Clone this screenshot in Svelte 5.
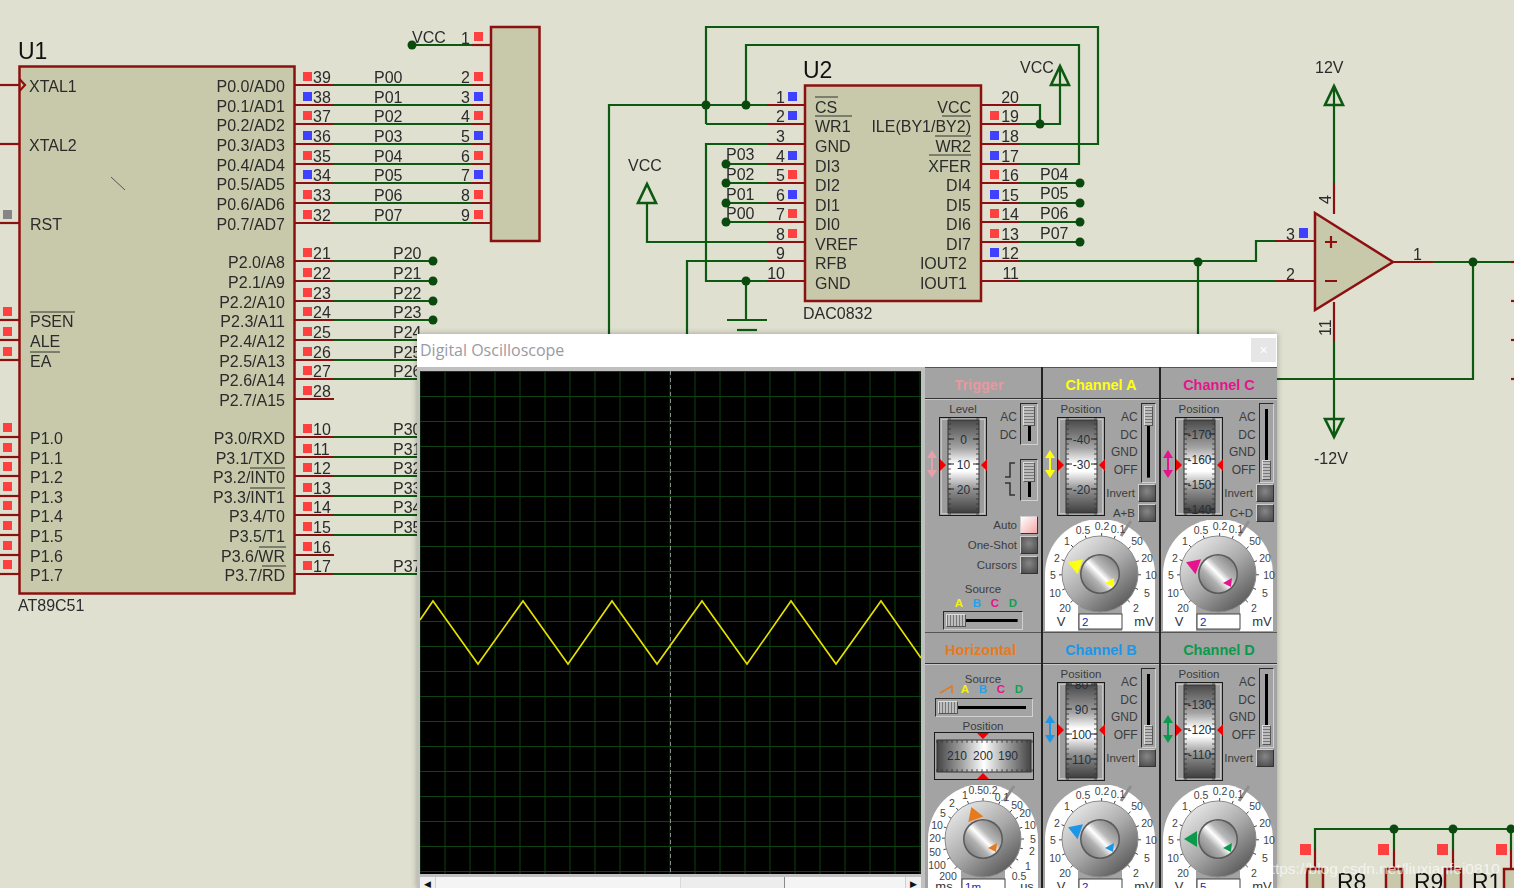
<script>
  const p0Y = [85, 105, 124, 144, 164, 183, 203, 223];
  const p0Labels = ['P0.0/AD0','P0.1/AD1','P0.2/AD2','P0.3/AD3','P0.4/AD4','P0.5/AD5','P0.6/AD6','P0.7/AD7'];
  const p0Blue = [false,true,false,true,false,true,false,false];
  const connBlue = [false,true,false,true,false,true,false,false];
  const p2Y = [261, 281, 301, 320, 340, 360, 379, 399];
  const p2Labels = ['P2.0/A8','P2.1/A9','P2.2/A10','P2.3/A11','P2.4/A12','P2.5/A13','P2.6/A14','P2.7/A15'];
  const p3Y = [437, 457, 476, 496, 515, 535, 555, 574];
  const p3Labels = ['P3.0/RXD','P3.1/TXD','P3.2/INT0','P3.3/INT1','P3.4/T0','P3.5/T1','P3.6/WR','P3.7/RD'];
  const p3Nets = ['P30','P31','P32','P33','P34','P35','','P37'];
  const p1Labels = ['P1.0','P1.1','P1.2','P1.3','P1.4','P1.5','P1.6','P1.7'];
  const leftPins = [[85,'XTAL1',false],[144,'XTAL2',false],[223,'RST','g'],[320,'PSEN','r'],[340,'ALE','r'],[360,'EA','r']];
  const u2Y = [105,124,144,164,183,203,222,242,261,281];
  const u2Left = ['CS','WR1','GND','DI3','DI2','DI1','DI0','VREF','RFB','GND'];
  const u2LeftSq = ['b','b','','b','r','b','r','r','',''];
  const u2Right = ['VCC','ILE(BY1/BY2)','WR2','XFER','DI4','DI5','DI6','DI7','IOUT2','IOUT1'];
  const u2RightSq = ['','r','b','b','r','b','r','r','b',''];
  const overlines = [[30,75,312],[30,60,352],[250,285,468],[250,285,488],[259,286,547],[262,286,566],[815,838,97],[815,852,116],[942,971,116],[935,971,136],[929,971,155]];
  const wires = [
    'M706 124V27H1098V144H1020','M746 105V45H1079V164H1020','M609 340V105H767','M706 124H767',
    'M767 144H706V281H767','M746 281V320','M727 320H767','M737 330H757',
    'M726 164H767','M726 183H767','M726 203H767','M726 222H767',
    'M647 203V242H767','M687 340V261H767',
    'M1020 105H1040V124','M1020 124H1060V66',
    'M1020 183H1080','M1020 203H1080','M1020 222H1080','M1020 242H1080',
    'M1020 261H1256V241H1275','M1020 281H1276','M1198 261V340',
    'M1334 86V183','M1334 342V437','M1433 262H1511','M1473 262V379H1270',
    'M412 45H472','M1315 849V829H1514','M1394 829V849','M1453 829V849','M1511 829V849'
  ];
  const pinsRed = [
    'M472 45H491','M1275 241H1315','M1276 281H1315','M1334 183V214','M1334 302V342','M1393 262H1433',
    'M1315 849V868','M1394 849V868','M1453 849V868','M1511 849V868',
    'M1511 262H1514','M1511 301H1514','M1511 340H1514','M1511 379H1514'
  ];
  const dots = [[412,45],[706,105],[746,105],[726,164],[726,183],[726,203],[726,222],[746,281],[1040,124],[1080,183],[1080,203],[1080,222],[1080,242],[1198,262],[1473,262],[1394,829],[1453,829],[1511,829]];

  const gridX = Array.from({length: 21}, (_, i) => 420 + i * 25);
  const gridY = Array.from({length: 21}, (_, i) => 371.5 + i * 25);
  const trace = '420,620 433,601 478,664 523,601 568,664 612,601 657,664 702,601 747,664 791,601 836,664 881,601 921,658';

  const vScale = [['0.1',18,-45],['0.2',2,-48],['0.5',-17,-44],['1',-33,-33],['2',-43,-16],['5',-47,1],['10',-45,19],['20',-35,34],['50',37,-33],['20',47,-16],['10',51,1],['5',47,19],['2',36,34]];
  const hScale = [['0.1',19,-42],['0.50.2',0,-49],['1',-18,-44],['2',-31,-36],['5',-40,-26],['10',-46,-14],['20',-48,-1],['50',-48,13],['100',-46,26],['200',-35,37],['50',34,-34],['20',42,-26],['10',47,-14],['5',50,0],['2',49,12],['1',45,27],['0.5',36,37]];

  const rowChannels = {
    a: { name:'Channel A', color:'#ffff10', vals:[['-40',22],['-30',47],['-20',72]], low:false, extra:'A+B', rot:20, input:'2' },
    c: { name:'Channel C', color:'#e6148c', vals:[['-170',17],['-160',42],['-150',67],['-140',92]], low:true, extra:'C+D', rot:20, input:'2' },
    b: { name:'Channel B', color:'#1c96e6', vals:[['80',2],['90',27],['100',52],['110',77]], low:true, extra:'', rot:20, input:'2' },
    d: { name:'Channel D', color:'#0a9a4c', vals:[['-130',22],['-120',47],['-110',72]], low:true, extra:'', rot:0, input:'5' }
  };
  const couple = ['AC','DC','GND','OFF'];
  const majorTicks = Array.from({length: 20}, (_, i) => i * 5 + 2);

  function tick(x, y, a, b) {
    const l = Math.hypot(x, y);
    return { x1: x / l * a, y1: y / l * a, x2: x / l * b, y2: y / l * b };
  }
</script>

{#snippet arrow(color)}
  <path d="M7 33L2 41H6V53H2L7 61L12 53H8V41H12Z" fill={color} />
{/snippet}

{#snippet drum(vals, color)}
  <svg class="drum" width="68" height="99" viewBox="0 0 68 99">
    {@render arrow(color)}
    <rect x="14.5" y="0.5" width="47" height="98" fill="#a8a8a8" stroke="#1a1a1a" />
    <rect x="16.5" y="2.5" width="43" height="94" fill="#9d9d9d" stroke="#c4c4c4" />
    <rect x="23" y="3" width="31" height="93" fill="url(#drumGrad)" stroke="#333" />
    {#each majorTicks as t}
      <path d="M23 {t}h3M51 {t}h3" stroke="#333" stroke-width="0.8" />
    {/each}
    {#each vals as [v, y]}
      <path d="M23 {y}h6M48 {y}h6" stroke="#222" stroke-width="1" />
      <text class="drumnum" x="38.5" y={y + 4.5} text-anchor="middle">{v}</text>
    {/each}
    <path d="M15 42L21 48L15 54Z M62 42L56 48L62 54Z" fill="#f00000" />
  </svg>
{/snippet}

{#snippet vslider(low, h)}
  <div class="vslider" class:low class:short={h === 'short'}>
    <div class="thumb"></div>
  </div>
{/snippet}

{#snippet hslider(wide)}
  <div class="hslider" class:wide>
    <div class="hthumb"></div>
  </div>
{/snippet}

{#snippet dial(scale, color, rot, input, left, right, cx)}
  <svg class="dial" width="117" height="111" viewBox="0 0 117 111">
    <path d="M{cx - 55} 111V54A55 55 0 0 1 {cx + 55} 54V111Z" fill="#fff" />
    <rect x={cx - 22} y="86" width="44" height="25" fill="#a3a3a3" />
    <path d="M{cx + 21} 16L{cx + 31} 1" stroke="#8f8f8f" stroke-width="3" />
    {#each scale as [t, x, y]}
      {@const k = tick(x, y, 36, 41)}
      <line x1={cx + k.x1} y1={54 + k.y1} x2={cx + k.x2} y2={54 + k.y2} stroke="#444" stroke-width="1" />
      <text class="scale" x={cx + x} y={54 + y + 4} text-anchor="middle">{t}</text>
    {/each}
    <circle cx={cx} cy="54" r="38" fill="url(#knobGrad)" stroke="#8a8a8a" />
    <circle cx={cx} cy="54" r="20" fill="#5a5a5a" />
    <circle cx={cx} cy="54" r="18.5" fill="url(#metalGrad)" />
    <g transform="translate({cx} 54) rotate({rot})">
      <path d="M-34 0L-21 -8L-21 8Z" fill={color} />
    </g>
    <path d="M{cx + 5} 63L{cx + 14} 58L{cx + 13} 67Z" fill={color} />
    <rect class="inbox" x={cx - 21} y="94" width="43" height="15" />
    <text class="intext" x={cx - 18} y="106">{input}</text>
    <text class="unit" x={cx - 39} y="106" text-anchor="middle">{left}</text>
    <text class="unit" x={cx + 44} y="106" text-anchor="middle">{right}</text>
  </svg>
{/snippet}

{#snippet channel(c)}
  <div class="panel">
    <div class="head" style="color:{c.color}">{c.name}</div>
    <div class="body">
      <div class="top">
        <div class="drumcol">
          <div class="cap">Position</div>
          {@render drum(c.vals, c.color)}
        </div>
        <div class="ctrl">
          <div class="coupling">
            <div class="couple-labels">
              {#each couple as l}<div>{l}</div>{/each}
            </div>
            {@render vslider(c.low, 'tall')}
          </div>
          <div class="btnrow"><span>Invert</span><div class="btn"></div></div>
          {#if c.extra}<div class="btnrow"><span>{c.extra}</span><div class="btn"></div></div>{/if}
        </div>
      </div>
      {@render dial(vScale, c.color, c.rot, c.input, 'V', 'mV', 57)}
    </div>
  </div>
{/snippet}

<svg width="0" height="0" class="defs">
  <defs>
    <linearGradient id="drumGrad" x1="0" y1="0" x2="0" y2="1">
      <stop offset="0" stop-color="#4a4a4a" /><stop offset="0.3" stop-color="#a4a4a4" />
      <stop offset="0.47" stop-color="#ffffff" /><stop offset="0.55" stop-color="#ffffff" />
      <stop offset="0.75" stop-color="#8f8f8f" /><stop offset="1" stop-color="#3e3e3e" />
    </linearGradient>
    <linearGradient id="drumGradH" x1="0" y1="0" x2="1" y2="0">
      <stop offset="0" stop-color="#444" /><stop offset="0.28" stop-color="#a8a8a8" />
      <stop offset="0.5" stop-color="#fff" /><stop offset="0.72" stop-color="#a8a8a8" /><stop offset="1" stop-color="#444" />
    </linearGradient>
    <linearGradient id="knobGrad" x1="0.15" y1="0.1" x2="0.85" y2="0.95">
      <stop offset="0" stop-color="#e6e6e6" /><stop offset="0.5" stop-color="#a8a8a8" /><stop offset="1" stop-color="#555" />
    </linearGradient>
    <linearGradient id="metalGrad" x1="0" y1="1" x2="1" y2="0">
      <stop offset="0" stop-color="#6a6a6a" /><stop offset="0.35" stop-color="#b0b0b0" />
      <stop offset="0.5" stop-color="#ffffff" /><stop offset="0.62" stop-color="#b8b8b8" /><stop offset="1" stop-color="#6e6e6e" />
    </linearGradient>
  </defs>
</svg>

<div class="page">
  <svg class="schematic" width="1514" height="888" viewBox="0 0 1514 888">
    <!-- U1 -->
    <rect class="body-fill" x="19.5" y="66.5" width="275" height="527" />
    <rect class="body-fill" x="491" y="27" width="48.5" height="214" />
    <path class="pin" d="M19.5 79L25 85L19.5 91" />
    <line x1="111" y1="177" x2="125" y2="190" stroke="#555" />
    <text class="big" x="18" y="59">U1</text>
    <text class="lbl" x="18" y="611">AT89C51</text>
    <text class="lbl" x="412" y="43">VCC</text>
    <text class="lbl" x="470" y="44" text-anchor="end">1</text>
    <rect class="sq-r" x="474" y="32" width="9" height="9" />

    {#each p0Y as y, i}
      <path class="pin" d="M295 {y}H334M472 {y}H491" />
      <path class="wire" d="M334 {y}H472" />
      <rect class={p0Blue[i] ? 'sq-b' : 'sq-r'} x="303" y={y - 13} width="9" height="9" />
      <text class="lbl" x="313" y={y - 2}>{39 - i}</text>
      <text class="lbl" x="374" y={y - 2}>P0{i}</text>
      <text class="lbl" x="470" y={y - 2} text-anchor="end">{i + 2}</text>
      <rect class={connBlue[i] ? 'sq-b' : 'sq-r'} x="474" y={y - 13} width="9" height="9" />
      <text class="lbl" x="285" y={y + 7} text-anchor="end">{p0Labels[i]}</text>
    {/each}

    {#each p2Y as y, i}
      <path class="pin" d="M295 {y}H334" />
      <rect class="sq-r" x="303" y={y - 13} width="9" height="9" />
      <text class="lbl" x="313" y={y - 2}>{21 + i}</text>
      <text class="lbl" x="285" y={y + 7} text-anchor="end">{p2Labels[i]}</text>
      {#if i < 7}
        <path class="wire" d="M334 {y}H433" />
        <circle class="dot" cx="433" cy={y} r="4.5" />
        <text class="lbl" x="393" y={y - 2}>P2{i}</text>
      {/if}
    {/each}

    {#each p3Y as y, i}
      <path class="pin" d="M295 {y}H334" />
      <rect class="sq-r" x="303" y={y - 13} width="9" height="9" />
      <text class="lbl" x="313" y={y - 2}>{10 + i}</text>
      <text class="lbl" x="285" y={y + 7} text-anchor="end">{p3Labels[i]}</text>
      {#if p3Nets[i]}
        <path class="wire" d="M334 {y}H440" />
        <text class="lbl" x="393" y={y - 2}>{p3Nets[i]}</text>
      {/if}
      <path class="pin" d="M0 {y}H19" />
      <rect class="sq-r" x="3" y={y - 14} width="9" height="9" />
      <text class="lbl" x="30" y={y + 7}>{p1Labels[i]}</text>
    {/each}

    {#each leftPins as [y, t, sq]}
      <path class="pin" d="M0 {y}H19" />
      {#if sq}<rect class={sq === 'g' ? 'sq-g' : 'sq-r'} x="3" y={y - 13} width="9" height="9" />{/if}
      <text class="lbl" x={t === 'XTAL1' || t === 'XTAL2' ? 29 : 30} y={y + 7}>{t}</text>
    {/each}

    <!-- U2 -->
    <rect class="body-fill" x="805" y="85.5" width="176" height="215.5" />
    <text class="big" x="803" y="78">U2</text>
    <text class="lbl" x="803" y="319">DAC0832</text>
    {#each u2Y as y, i}
      <path class="pin" d="M767 {y}H805M981 {y}H1020" />
      <text class="lbl" x="785" y={y - 2} text-anchor="end">{i + 1}</text>
      {#if u2LeftSq[i]}<rect class={u2LeftSq[i] === 'b' ? 'sq-b' : 'sq-r'} x="788" y={y - 13} width="9" height="9" />{/if}
      <text class="lbl" x="815" y={y + 7.5}>{u2Left[i]}</text>
      <text class="lbl" x={i > 7 ? 967 : 971} y={y + 7.5} text-anchor="end">{u2Right[i]}</text>
      <text class="lbl" x="1019" y={y - 2} text-anchor="end">{20 - i}</text>
      {#if u2RightSq[i]}<rect class={u2RightSq[i] === 'b' ? 'sq-b' : 'sq-r'} x="990" y={y - 13} width="9" height="9" />{/if}
    {/each}
    <text class="lbl" x="726" y="160">P03</text>
    <text class="lbl" x="726" y="180">P02</text>
    <text class="lbl" x="726" y="200">P01</text>
    <text class="lbl" x="726" y="219">P00</text>
    <text class="lbl" x="1040" y="180">P04</text>
    <text class="lbl" x="1040" y="199">P05</text>
    <text class="lbl" x="1040" y="219">P06</text>
    <text class="lbl" x="1040" y="239">P07</text>
    <text class="lbl" x="628" y="171">VCC</text>
    <text class="lbl" x="1020" y="73">VCC</text>
    <path class="wire arrowhead" d="M647 184L638 203H656Z" />
    <path class="wire arrowhead" d="M1060 66L1051 85H1069Z" />

    {#each overlines as [a, b, y]}
      <line class="over" x1={a} x2={b} y1={y} y2={y} />
    {/each}

    {#each wires as d}<path class="wire" {d} />{/each}
    {#each pinsRed as d}<path class="pin" {d} />{/each}
    {#each dots as [x, y]}<circle class="dot" cx={x} cy={y} r="4.5" />{/each}

    <!-- op amp -->
    <path class="body-fill" d="M1315 213L1393 262L1315 310Z" />
    <path class="pin" d="M1325 242H1337M1331 236V248M1325 281H1337" />
    <path class="wire arrowhead" d="M1334 86L1325 105H1343Z" />
    <path class="wire arrowhead" d="M1334 437L1325 419H1343Z" />
    <text class="lbl" x="1286" y="240">3</text>
    <rect class="sq-b" x="1299" y="228" width="9" height="10" />
    <text class="lbl" x="1286" y="280">2</text>
    <text class="lbl" x="1413" y="260">1</text>
    <text class="lbl" x="1315" y="73">12V</text>
    <text class="lbl" x="1314" y="464">-12V</text>
    <text class="lbl" transform="translate(1331 204) rotate(-90)">4</text>
    <text class="lbl" transform="translate(1331 336) rotate(-90)">11</text>

    <!-- resistors -->
    <rect class="sq-r" x="1300" y="844" width="11" height="11" />
    <rect class="sq-r" x="1378" y="844" width="11" height="11" />
    <rect class="sq-r" x="1437" y="844" width="11" height="11" />
    <rect class="sq-r" x="1496" y="844" width="11" height="11" />
    <rect class="body-fill" x="1307" y="869" width="16" height="40" />
    <rect class="body-fill" x="1386" y="869" width="16" height="40" />
    <rect class="body-fill" x="1445" y="869" width="16" height="40" />
    <rect class="body-fill" x="1504" y="869" width="16" height="40" />
    <text class="big" x="1337" y="890">R8</text>
    <text class="big" x="1414" y="890">R9</text>
    <text class="big" x="1472" y="890">R1</text>
  </svg>

  <section class="scope">
    <header class="titlebar">
      <span>Digital Oscilloscope</span>
      <button class="close" aria-label="Close">×</button>
    </header>
    <div class="scope-main">
      <div class="screen-col">
        <svg class="screen" width="501" height="503" viewBox="420 371 501 503">
          <rect x="420" y="371" width="501" height="503" fill="#000" />
          {#each gridX as x}<line x1={x} x2={x} y1="371" y2="874" class="grid" />{/each}
          {#each gridY as y}<line x1="420" x2="921" y1={y} y2={y} class="grid" />{/each}
          <line x1="670.5" x2="670.5" y1="371" y2="874" class="centre" />
          <polyline points={trace} fill="none" stroke="#e6e000" stroke-width="1.6" />
        </svg>
        <div class="scroll">
          <div class="sbtn">◀</div>
          <div class="strack"><div class="sthumb"></div></div>
          <div class="sbtn">▶</div>
        </div>
      </div>

      <div class="panels">
        <!-- Trigger -->
        <div class="panel">
          <div class="head trig">Trigger</div>
          <div class="body">
            <div class="top">
              <div class="drumcol">
                <div class="cap">Level</div>
                {@render drum([['0',22],['10',47],['20',72]], '#e8a0a8')}
              </div>
              <div class="ctrl">
                <div class="coupling">
                  <div class="couple-labels"><div>AC</div><div>DC</div></div>
                  {@render vslider(false, 'short')}
                </div>
                <div class="coupling edge">
                  <svg class="edges" width="11" height="34" viewBox="0 0 11 34">
                    <path d="M0 15h5V1h5M0 21h5v12h5" fill="none" stroke="#333" stroke-width="1.5" />
                  </svg>
                  {@render vslider(false, 'short')}
                </div>
                <div class="btnrow first"><span>Auto</span><div class="btn pink"></div></div>
                <div class="btnrow"><span>One-Shot</span><div class="btn"></div></div>
                <div class="btnrow"><span>Cursors</span><div class="btn"></div></div>
              </div>
            </div>
            <div class="src-cap trigsrc">Source</div>
            <div class="srcs">
              <span class="a">A</span><span class="b">B</span><span class="c">C</span><span class="d">D</span>
            </div>
            <div class="hs-wrap">{@render hslider(false)}</div>
          </div>
        </div>

        {@render channel(rowChannels.a)}
        {@render channel(rowChannels.c)}

        <!-- Horizontal -->
        <div class="panel">
          <div class="head horiz">Horizontal</div>
          <div class="body">
            <div class="src-cap hsrc">Source</div>
            <div class="srcs hs">
              <svg width="18" height="10" viewBox="0 0 18 10"><path d="M2 9L14 2V9" fill="none" stroke="#e07a20" stroke-width="1.5" /></svg>
              <span class="a">A</span><span class="b">B</span><span class="c">C</span><span class="d">D</span>
            </div>
            <div class="hs-wrap wide">{@render hslider(true)}</div>
            <div class="src-cap posi">Position</div>
            <svg class="hdrum" width="100" height="48" viewBox="0 0 100 48">
              <rect x="0.5" y="0.5" width="99" height="47" fill="#a8a8a8" stroke="#1a1a1a" />
              <rect x="3" y="8" width="94" height="32" fill="url(#drumGradH)" stroke="#333" />
              {#each majorTicks as t}
                <path d="M{t + 1} 8v3M{t + 1} 37v3" stroke="#333" stroke-width="0.8" />
              {/each}
              <text class="drumnum" x="23" y="28" text-anchor="middle">210</text>
              <text class="drumnum" x="49" y="28" text-anchor="middle">200</text>
              <text class="drumnum" x="74" y="28" text-anchor="middle">190</text>
              <path d="M43 1H55L49 7Z M43 47H55L49 41Z" fill="#f00000" />
            </svg>
            {@render dial(hScale, '#e67a1c', 70, '1m', 'ms', 'us', 58)}
          </div>
        </div>

        {@render channel(rowChannels.b)}
        {@render channel(rowChannels.d)}
      </div>
    </div>
  </section>

  <div class="watermark">https://blog.csdn.net/liuxianfei0810</div>
</div>

<style>
  :global(body) { margin: 0; background: #dfe0d0; }
  .defs { position: absolute; }
  .page {
    position: relative;
    width: 1514px;
    height: 888px;
    overflow: hidden;
    background: #dfe0d0;
    font-family: "Liberation Sans", sans-serif;
  }
  .schematic { display: block; filter: blur(0.3px); }
  .lbl { font: 16px "Liberation Sans", sans-serif; fill: #2b2b2b; }
  .big { font: 23px "Liberation Sans", sans-serif; fill: #111; }
  .body-fill { fill: #c8c9ab; stroke: #8c1010; stroke-width: 2.5; }
  .pin { fill: none; stroke: #8c1010; stroke-width: 2.2; }
  .wire { fill: none; stroke: #0c5a12; stroke-width: 2.2; }
  .arrowhead { stroke-width: 2.6; }
  .dot { fill: #0a4a0e; }
  .over { stroke: #333; stroke-width: 1; }
  .sq-r { fill: #ff4040; }
  .sq-b { fill: #4040ff; }
  .sq-g { fill: #858585; }

  .scope {
    position: absolute;
    left: 417px;
    top: 334px;
    width: 860px;
    height: 554px;
    overflow: hidden;
    background: #a3a3a3;
    box-shadow: 0 0 6px rgba(0, 0, 0, 0.3);
  }
  .titlebar {
    display: flex;
    align-items: center;
    justify-content: space-between;
    height: 33px;
    padding: 0 1px 2px 3px;
    background: #fff;
    color: #9a9aa2;
    font: 16px "Open Sans", "Noto Sans", sans-serif;
    box-sizing: border-box;
  }
  .close {
    width: 25px;
    height: 24px;
    border: 0;
    background: #e6e6e6;
    color: #fff;
    font-size: 14px;
    padding: 0;
  }
  .scope-main { display: flex; }
  .screen-col {
    width: 508px;
    padding: 4px 0 0 3px;
    box-sizing: border-box;
    background: #c0c0c0;
  }
  .screen { display: block; }
  .grid { stroke: #0e4210; stroke-width: 1; }
  .centre { stroke: #8a8a8a; stroke-width: 1; stroke-dasharray: 4 3; }
  .scroll {
    display: flex;
    height: 12px;
    margin-top: 3px;
    width: 501px;
    background: #f4f4f4;
  }
  .sbtn {
    width: 16px;
    text-align: center;
    font-size: 9px;
    line-height: 14px;
    color: #111;
    background: #f0f0f0;
    border-right: 1px solid #cfcfcf;
    box-sizing: border-box;
  }
  .sbtn:last-child { border-right: 0; border-left: 1px solid #cfcfcf; }
  .strack { flex: 1; display: flex; padding-left: 244px; }
  .sthumb { width: 103px; background: #ededed; border-right: 1px solid #8a8a8a; border-left: 1px solid #d8d8d8; }

  .panels {
    display: grid;
    grid-template-columns: 118px 118px 116px;
    grid-auto-rows: 265px;
    width: 352px;
    background: #222;
  }
  .panel {
    display: flex;
    flex-direction: column;
    border-right: 2px solid #222;
    box-sizing: border-box;
    color: #3c3c3c;
    background: #a3a3a3;
  }
  .panel:nth-child(3n) { border-right: 0; }
  .head {
    height: 32px;
    display: flex;
    align-items: center;
    justify-content: center;
    padding-top: 3px;
    font-weight: 700;
    font-size: 14.5px;
    border-bottom: 1px solid #333;
    border-top: 1px solid #555;
    box-sizing: border-box;
    background: #a3a3a3;
  }
  .trig { color: #e898a0; padding-right: 8px; }
  .horiz { color: #e67a1c; padding-right: 5px; }
  .body {
    position: relative;
    flex: 1;
    padding-top: 3px;
    border-top: 1px solid #c8c8c8;
    font-size: 11.5px;
  }
  .top { display: flex; }
  .drumcol { width: 68px; flex: none; }
  .cap { height: 12px; line-height: 12px; text-align: center; padding-left: 8px; margin-bottom: 2px; }
  .drum { display: block; }
  .drumnum { font: 12px "Liberation Sans", sans-serif; fill: #25303a; }
  .ctrl { flex: 1; min-width: 0; }
  .coupling { display: flex; justify-content: flex-end; padding-right: 3px; }
  .couple-labels { margin-right: 3px; padding-top: 6px; text-align: right; font-size: 12px; line-height: 17.5px; }
  .coupling.edge { margin-top: 14px; }
  .edges { margin: 3px 4px 0 0; }
  .vslider {
    display: flex;
    flex-direction: column;
    width: 18px;
    height: 80px;
    padding: 2px;
    box-sizing: border-box;
    border: 1px solid #333;
    border-color: #2a2a2a #d0d0d0 #d0d0d0 #2a2a2a;
    background: linear-gradient(#000, #000) center / 3px 88% no-repeat, #a3a3a3;
  }
  .vslider.short { height: 42px; }
  .vslider.low { justify-content: flex-end; }
  .thumb {
    height: 20px;
    background: repeating-linear-gradient(#777 0 1px, #bdbdbd 1px 3px);
    border: 1px solid #e0e0e0;
    border-color: #ddd #555 #555 #ddd;
    box-sizing: border-box;
  }
  .btnrow {
    display: flex;
    justify-content: flex-end;
    align-items: center;
    height: 20px;
    padding-right: 3px;
    white-space: nowrap;
    gap: 3px;
  }
  .btnrow.first { margin-top: 14px; }
  .btn {
    width: 18px;
    height: 18px;
    flex: none;
    box-sizing: border-box;
    border: 1px solid;
    border-color: #d0d0d0 #333 #333 #d0d0d0;
    background: radial-gradient(circle at 50% 40%, #868686, #474747);
  }
  .btn.pink { background: linear-gradient(135deg, #fff, #f4a6a6); }
  .dial { position: absolute; left: 0; bottom: 1px; display: block; }
  .scale { font: 10.5px "Liberation Sans", sans-serif; fill: #444; }
  .unit { font: 13px "Liberation Sans", sans-serif; fill: #333; }
  .inbox { fill: #fff; stroke: #444; stroke-width: 1; }
  .intext { font: 11.5px "Liberation Sans", sans-serif; fill: #2525a5; }

  .src-cap { text-align: center; line-height: 12px; height: 12px; }
  .trigsrc { margin-top: 8px; height: 14px; }
  .hsrc { margin-top: 5px; height: 10px; }
  .srcs {
    display: flex;
    justify-content: center;
    height: 12px;
    font-size: 11.5px;
    line-height: 13px;
    font-weight: 700;
    padding-left: 6px;
  }
  .srcs span { width: 18px; text-align: center; }
  .srcs.hs { padding-left: 0; height: 14px; }
  .srcs svg { margin-top: 1px; }
  .a { color: #f4f400; }
  .b { color: #2aa0e8; }
  .c { color: #e6148c; }
  .d { color: #14a050; }
  .hs-wrap { padding: 2px 0 0 18px; }
  .hs-wrap.wide { padding: 1px 0 0 10px; }
  .hslider {
    display: flex;
    width: 80px;
    height: 19px;
    padding: 2px;
    box-sizing: border-box;
    border: 1px solid;
    border-color: #2a2a2a #d0d0d0 #d0d0d0 #2a2a2a;
    background: linear-gradient(#000, #000) center / 88% 3px no-repeat, #a3a3a3;
  }
  .hslider.wide { width: 98px; }
  .hthumb {
    width: 20px;
    background: repeating-linear-gradient(90deg, #777 0 1px, #bdbdbd 1px 3px);
    border: 1px solid;
    border-color: #ddd #555 #555 #ddd;
    box-sizing: border-box;
  }
  .posi { margin-top: 3px; }
  .hdrum { display: block; margin: 0 0 0 9px; }
  .watermark {
    position: absolute;
    left: 1262px;
    top: 860px;
    color: rgba(255, 255, 255, 0.66);
    font-size: 15.5px;
    white-space: nowrap;
    pointer-events: none;
  }
</style>
